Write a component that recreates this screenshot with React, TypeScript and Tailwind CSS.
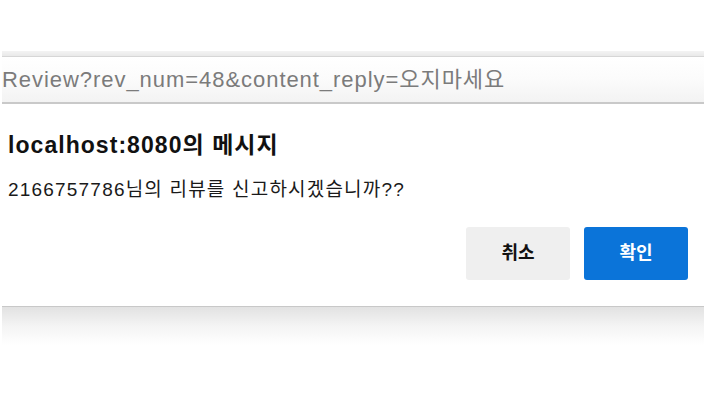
export default function App() {
  const font = { fontFamily: '"Liberation Sans", "Noto Sans CJK KR", sans-serif' };
  return (
    <div className="w-[706px] h-[418px] bg-white overflow-hidden" style={font}>
      <div className="h-[51px]" />
      <div className="mx-[2px] flex flex-col">
        {/* address bar */}
        <div className="h-[5px] bg-gradient-to-b from-[#f3f3f3] to-[#e9e9e9]" />
        <div className="h-px bg-[#d6d6d6]" />
        <div className="h-[45px] flex items-center bg-gradient-to-b from-[#ffffff] via-[#fbfbfb] to-[#f3f3f3]">
          <span className="text-[22px] leading-[24px] text-[#7b7b7b] tracking-[0.95px] pt-px">
            Review?rev_num=48&amp;content_reply=오지마세요
          </span>
        </div>
        <div className="h-[2px] bg-[#c9c9c9]" />

        {/* dialog */}
        <div className="bg-white pl-[6px] pr-[16px] pt-[28px] pb-[26px] flex flex-col">
          <div className="text-[23px] leading-[27px] font-bold text-[#111] tracking-[1.05px]">
            localhost:8080의 메시지
          </div>
          <div className="mt-[20px] text-[19px] leading-[22px] text-[#1a1a1a] tracking-[1.2px]">
            2166757786님의 리뷰를 신고하시겠습니까??
          </div>
          <div className="mt-[26px] flex justify-end gap-[14px]">
            <button className="w-[104px] h-[53px] rounded-[3px] bg-[#efefef] text-[18px] font-bold text-[#111]">
              취소
            </button>
            <button className="w-[104px] h-[53px] rounded-[3px] bg-[#0b74d9] text-[18px] font-bold text-white">
              확인
            </button>
          </div>
        </div>
        <div className="h-px bg-[#c8c8c8]" />
        <div className="h-[38px] bg-gradient-to-b from-[#e2e2e2] via-[#f4f4f4] to-white" />
      </div>
    </div>
  );
}
